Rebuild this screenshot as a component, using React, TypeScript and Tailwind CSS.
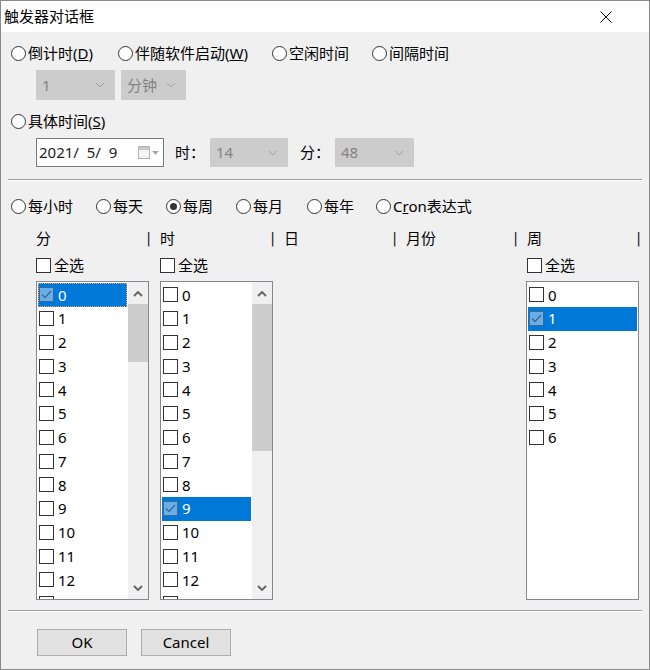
import React from "react";

function Radio({ label, checked, className }: { label: React.ReactNode; checked?: boolean; className?: string }) {
  return (
    <div className={`flex items-center h-[20px] shrink-0 ${className ?? ""}`}>
      <span className="w-[15px] h-[15px] rounded-full border border-[#333333] bg-white flex items-center justify-center shrink-0">
        {checked && <span className="w-[7px] h-[7px] rounded-full bg-[#333333]" />}
      </span>
      <span className="ml-[2px] leading-[20px] whitespace-nowrap">{label}</span>
    </div>
  );
}

function Check({ checked }: { checked?: boolean }) {
  if (checked) {
    return (
      <span className="w-[15px] h-[15px] border border-[#3a6a95] bg-[#6aaee8] shrink-0 flex items-center justify-center">
        <svg width="11" height="9" viewBox="0 0 11 9">
          <polyline points="1,4.5 4,7.5 10,1" fill="none" stroke="#3a6a95" strokeWidth="1.3" />
        </svg>
      </span>
    );
  }
  return <span className="w-[15px] h-[15px] border border-[#333333] bg-white shrink-0" />;
}

function Chevron({ color = "#a0a0a0" }: { color?: string }) {
  return (
    <svg width="10" height="6" viewBox="0 0 10 6">
      <polyline points="1,1 5,5 9,1" fill="none" stroke={color} strokeWidth="1" />
    </svg>
  );
}

function Combo({ value, width }: { value: string; width: string }) {
  return (
    <div className={`${width} h-full shrink-0 bg-[#cccccc] border border-[#cccccc] flex items-center justify-between pl-[5px] pr-[9px] text-[#838383]`}>
      <span>{value}</span>
      <Chevron />
    </div>
  );
}

function ScrollBar({ thumbTop, thumbHeight }: { thumbTop: number; thumbHeight: number }) {
  return (
    <div className="relative w-[20px] h-full bg-[#f0f0f0] shrink-0">
      <div className="h-[22px] flex items-center justify-center">
        <svg width="10" height="7" viewBox="0 0 10 7">
          <polyline points="1,6 5,2 9,6" fill="none" stroke="#606060" strokeWidth="1.8" />
        </svg>
      </div>
      <div className="absolute left-0 right-0 bg-[#cdcdcd]" style={{ top: thumbTop, height: thumbHeight }} />
      <div className="absolute bottom-0 left-0 right-0 h-[22px] flex items-center justify-center">
        <svg width="10" height="7" viewBox="0 0 10 7">
          <polyline points="1,1 5,5 9,1" fill="none" stroke="#606060" strokeWidth="1.8" />
        </svg>
      </div>
    </div>
  );
}

function ListBox({
  count,
  selected,
  focused,
  scroll,
}: {
  count: number;
  selected: number;
  focused?: boolean;
  scroll?: { top: number; height: number };
}) {
  const items = Array.from({ length: count }, (_, i) => i);
  return (
    <div className="w-[113px] h-[319px] shrink-0 border border-[#828790] bg-white flex overflow-hidden">
      <div className="flex-1 p-[1px] overflow-hidden">
        {items.map((i) => {
          const sel = i === selected;
          return (
            <div
              key={i}
              className={`h-[23.75px] flex items-center pl-[1px] ${sel ? "bg-[#0078d7] text-white" : ""} ${
                sel && focused ? "outline outline-1 outline-dotted outline-[#e8a450] -outline-offset-1" : ""
              }`}
            >
              <Check checked={sel} />
              <span className="ml-[4px]">{i}</span>
            </div>
          );
        })}
        {scroll && (
          <div className="h-[23.75px] flex items-center pl-[1px]">
            <Check />
          </div>
        )}
      </div>
      {scroll && <ScrollBar thumbTop={scroll.top} thumbHeight={scroll.height} />}
    </div>
  );
}

function Separator({ className }: { className?: string }) {
  return (
    <div className={`${className ?? ""}`}>
      <div className="h-px bg-[#a0a0a0]" />
      <div className="h-px bg-white" />
    </div>
  );
}

function HeaderCell({ label, width }: { label: string; width: string }) {
  return (
    <div className={`${width} shrink-0 flex items-center pr-[9px]`}>
      <span>{label}</span>
      <span className="ml-auto font-['DejaVu_Sans',sans-serif] text-[14px] text-[#222222]">|</span>
    </div>
  );
}

function Button({ children }: { children: React.ReactNode }) {
  return (
    <button className="w-[90px] h-[27px] bg-[#e1e1e1] border border-[#adadad] flex items-center justify-center">
      {children}
    </button>
  );
}

export default function App() {
  return (
    <div className="w-[650px] h-[670px] border border-[#8a8a8a] bg-[#f0f0f0] flex flex-col text-[15px] text-black font-['Noto_Sans','Noto_Sans_CJK_SC',sans-serif] overflow-hidden">
      <div className="h-[31px] bg-white flex items-center justify-between pl-[3px] pr-[37px] shrink-0">
        <span>触发器对话框</span>
        <svg width="12" height="12" viewBox="0 0 12 12">
          <path d="M0.5 0.5 L11.5 11.5 M11.5 0.5 L0.5 11.5" stroke="#000" strokeWidth="1" />
        </svg>
      </div>

      <div className="flex-1 px-[7px] flex flex-col">
        <div className="mt-[11px] ml-[3px] flex">
          <Radio className="w-[107px]" label={<>倒计时(<u>D</u>)</>} />
          <Radio className="w-[154px]" label={<>伴随软件启动(<u>W</u>)</>} />
          <Radio className="w-[100px]" label="空闲时间" />
          <Radio label="间隔时间" />
        </div>

        <div className="mt-[7px] ml-[28px] h-[30px] flex gap-[6px]">
          <Combo value="1" width="w-[79px]" />
          <Combo value="分钟" width="w-[65px]" />
        </div>

        <div className="mt-[11px] ml-[3px] flex">
          <Radio label={<>具体时间(<u>S</u>)</>} />
        </div>

        <div className="mt-[7px] ml-[28px] h-[29px] flex items-center">
          <div className="w-[128px] h-full shrink-0 bg-white border border-[#7a7a7a] flex items-center pl-[2px] pr-[4px]">
            <span className="whitespace-pre text-[#222222]">2021/  5/  9</span>
            <span className="ml-auto flex items-center gap-[2px]">
              <span className="w-[12px] h-[13px] border border-[#b5b5b5] bg-[#f4f4f4] flex flex-col">
                <span className="h-[3px] bg-[#c8c8c8]" />
              </span>
              <svg width="7" height="4" viewBox="0 0 7 4">
                <polygon points="0,0 7,0 3.5,4" fill="#a8a8a8" />
              </svg>
            </span>
          </div>
          <span className="ml-[11px] w-[35px] shrink-0">时：</span>
          <Combo value="14" width="w-[78px]" />
          <span className="ml-[12px] w-[35px] shrink-0">分：</span>
          <Combo value="48" width="w-[79px]" />
        </div>

        <Separator className="mt-[12px]" />

        <div className="mt-[15px] ml-[3px] flex">
          <Radio className="w-[85px]" label="每小时" />
          <Radio className="w-[70px]" label="每天" />
          <Radio className="w-[70px]" label="每周" checked />
          <Radio className="w-[71px]" label="每月" />
          <Radio className="w-[69px]" label="每年" />
          <Radio label={<>C<u>r</u>on表达式</>} />
        </div>

        <div className="mt-[13px] ml-[28px] h-[18px] flex leading-[18px]">
          <HeaderCell label="分" width="w-[124px]" />
          <HeaderCell label="时" width="w-[124px]" />
          <HeaderCell label="日" width="w-[122px]" />
          <HeaderCell label="月份" width="w-[121px]" />
          <HeaderCell label="周" width="w-[123px]" />
        </div>

        <div className="mt-[9px] ml-[28px] h-[18px] flex items-center">
          <div className="w-[124px] shrink-0 flex items-center">
            <Check />
            <span className="ml-[3px]">全选</span>
          </div>
          <div className="w-[367px] shrink-0 flex items-center">
            <Check />
            <span className="ml-[3px]">全选</span>
          </div>
          <div className="flex items-center">
            <Check />
            <span className="ml-[3px]">全选</span>
          </div>
        </div>

        <div className="mt-[7px] ml-[28px] flex">
          <div className="w-[124px] shrink-0">
            <ListBox count={13} selected={0} focused scroll={{ top: 22, height: 58 }} />
          </div>
          <div className="w-[366px] shrink-0">
            <ListBox count={13} selected={9} scroll={{ top: 22, height: 147 }} />
          </div>
          <ListBox count={7} selected={1} />
        </div>

        <Separator className="mt-[10px]" />

        <div className="mt-[17px] ml-[29px] flex gap-[14px]">
          <Button>OK</Button>
          <Button>Cancel</Button>
        </div>
      </div>
    </div>
  );
}
